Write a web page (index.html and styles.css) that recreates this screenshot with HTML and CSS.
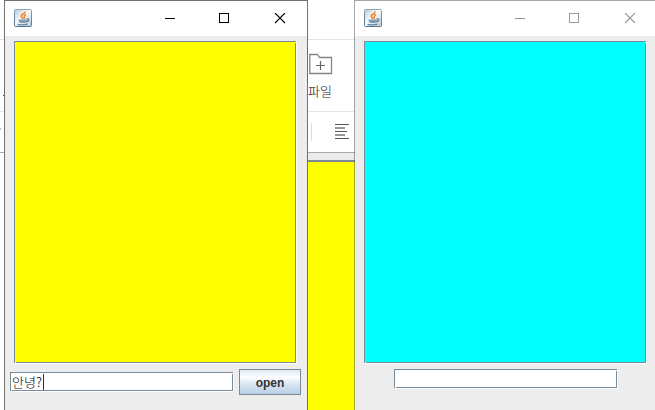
FILE: index.html
```html
<!DOCTYPE html>
<html lang="ko">
<head>
<meta charset="utf-8">
<title>Desktop</title>
<link rel="stylesheet" href="styles.css">
</head>
<body>
<svg class="defs" width="0" height="0">
  <defs>
    <linearGradient id="tile" x1="0" y1="0" x2="1" y2="1">
      <stop offset="0" stop-color="#b5c9d9"/><stop offset=".45" stop-color="#fafafa"/><stop offset="1" stop-color="#b9c9d6"/>
    </linearGradient>
    <linearGradient id="edge" x1="0" y1="0" x2="0" y2="1">
      <stop offset="0" stop-color="#8ba5b9"/><stop offset="1" stop-color="#4f7391"/>
    </linearGradient>
    <symbol id="java" viewBox="0 0 18 18">
      <rect x=".5" y=".5" width="17" height="17" rx="1" fill="url(#tile)" stroke="url(#edge)"/>
      <path d="M11 2.500C11.500 5 6.500 5.500 7.200 7.500C7.500 8.500 8.800 9 8.800 10M12 5.300C9 6.500 11.200 8 9.800 9.800" fill="none" stroke="#ee8228" stroke-width="1.500"/>
      <path d="M4.500 10.500H12.500V12.500Q12 14 10 14H7Q5 14 4.500 12Z" fill="#7f9cb3"/>
      <path d="M12.500 10.200C15.800 9 15.500 12.500 12 12.700M3.500 15.300Q8.500 16.500 13.500 15.100" fill="none" stroke="#5f82a0" stroke-width="1.300"/>
    </symbol>
  </defs>
</svg>
<main class="desktop">
  <section class="editor">
    <div class="tabs"></div>
    <div class="ribbon">
      <div class="cut"></div>
      <div class="tool">
        <svg width="24" height="22" viewBox="0 0 24 22" fill="none" stroke="#858585"><path d="M.8 20.500V1.500H8.500L10.500 4.500H22.500V20.500Z" stroke-width="1.300"/><path d="M11.500 8V17M7 12.500H16" stroke="#666" stroke-width="1.200"/></svg>
        <span class="tool-name">파일</span>
      </div>
    </div>
    <div class="format">
      <i class="stub"></i>
      <i class="divider"></i>
      <svg width="14" height="15" viewBox="0 0 14 15" shape-rendering="crispEdges"><path d="M0 .5H14M0 7.500H12M0 14.500H14" stroke="#555"/><path d="M0 4H10M0 11H10" stroke="#999" stroke-width="2"/></svg>
    </div>
    <div class="gap"></div>
    <div class="page"></div>
  </section>

  <section class="window active">
    <header class="titlebar">
      <svg class="logo" width="18" height="18"><use href="#java"/></svg>
      <svg class="controls" width="121" height="11" viewBox="0 0 121 11" fill="none" stroke="currentColor"><path d="M0 5.500H10M54.500 .5H63.500V9.500H54.500Z" shape-rendering="crispEdges"/><path d="M110 0L120 10M120 0L110 10" stroke-width="1.100"/></svg>
    </header>
    <div class="bevel canvas yellow"></div>
    <div class="row">
      <div class="bevel field"><span>안녕?</span><i class="caret"></i></div>
      <button class="open">open</button>
    </div>
  </section>

  <section class="window inactive">
    <header class="titlebar">
      <svg class="logo" width="18" height="18"><use href="#java"/></svg>
      <svg class="controls" width="121" height="11" viewBox="0 0 121 11" fill="none" stroke="currentColor"><path d="M0 5.500H10M54.500 .5H63.500V9.500H54.500Z" shape-rendering="crispEdges"/><path d="M110 0L120 10M120 0L110 10" stroke-width="1.100"/></svg>
    </header>
    <div class="bevel canvas cyan"></div>
    <div class="row centered">
      <div class="bevel field"></div>
    </div>
  </section>
</main>
</body>
</html>
```
FILE: styles.css
```css
* { box-sizing: border-box; }
body { margin: 0; font-family: "Liberation Sans", "Noto Sans CJK KR", sans-serif; }
.defs { position: absolute; }
.desktop { position: relative; width: 655px; height: 410px; overflow: hidden; background: #fff; }
svg { display: block; flex: none; }

.editor { display: flex; flex-direction: column; height: 410px; }
.tabs { height: 40px; border-bottom: 1px solid #e4e4e4; }
.ribbon { display: flex; height: 72px; border-bottom: 1px solid #e4e4e4; }
.cut { width: 2px; height: 1px; margin: 55px 0 0 3px; background: #444; }
.tool { display: flex; flex-direction: column; margin: 13px 0 0 304px; }
.tool-name { margin: 7px 0 0 -1px; font: 13px/18px "Noto Sans CJK KR", sans-serif; font-weight: 300; color: #111; white-space: nowrap; }
.format { display: flex; align-items: flex-start; height: 41px; border-bottom: 1px solid #a8a8a8; }
.stub { width: 1px; height: 2px; margin-top: 16px; background: #bbb; }
.divider { width: 1px; height: 18px; margin: 11px 23px 0 310px; background: #ddd; }
.format svg { margin-top: 12px; }
.gap { height: 9px; margin-left: 307px; background: #ebebed; border-bottom: 2px solid #7e8997; }
.page { flex: 1; margin-left: 307px; background: #ff0; }

.window { position: absolute; top: 0; width: 304px; height: 420px; border: 1px solid; background: #ededed; background-clip: padding-box; }
.active { left: 4px; border-color: #707070; }
.inactive { left: 354px; border-color: rgba(80, 80, 80, .5); }
.titlebar { display: flex; height: 35px; padding: 8px 0 0 9px; background: #fff; }
.controls { margin: 4px 0 0 133px; color: #000; }
.inactive .controls { color: #999; }

.bevel { position: relative; border: 1px solid #7a8a99; box-shadow: 1px 1px 0 #fff; }
.bevel::before { content: ""; position: absolute; left: 0; bottom: -1px; width: 1px; height: 1px; background: #fff; }
.bevel::after { content: ""; position: absolute; right: -1px; top: 0; width: 1px; height: 1px; background: #fff; }
.canvas { width: 282px; height: 322px; margin: 5px 0 6px 9px; }
.yellow { background: #ff0; }
.cyan { background: #0ff; }
.row { display: flex; align-items: flex-start; gap: 6px; padding-left: 5px; }
.row:not(.centered) .field { margin-top: 3px; }
.centered { padding-left: 39px; }
.field { display: flex; align-items: center; width: 223px; height: 19px; padding-left: 1px; background: #fff; font: 13px/16px "Noto Sans CJK KR", sans-serif; font-weight: 300; color: #000; white-space: nowrap; }
.field span { width: 31px; }
.caret { width: 1px; height: 16px; background: #333; }
.open { width: 62px; height: 26px; padding: 2px 0 0; border: 1px solid #7a8a99; background: linear-gradient(#dde8f3, #fff 30%, #dde8f3 55%, #b8cfe5); font: bold 12px/22px "Liberation Sans", sans-serif; color: #333; }
```
